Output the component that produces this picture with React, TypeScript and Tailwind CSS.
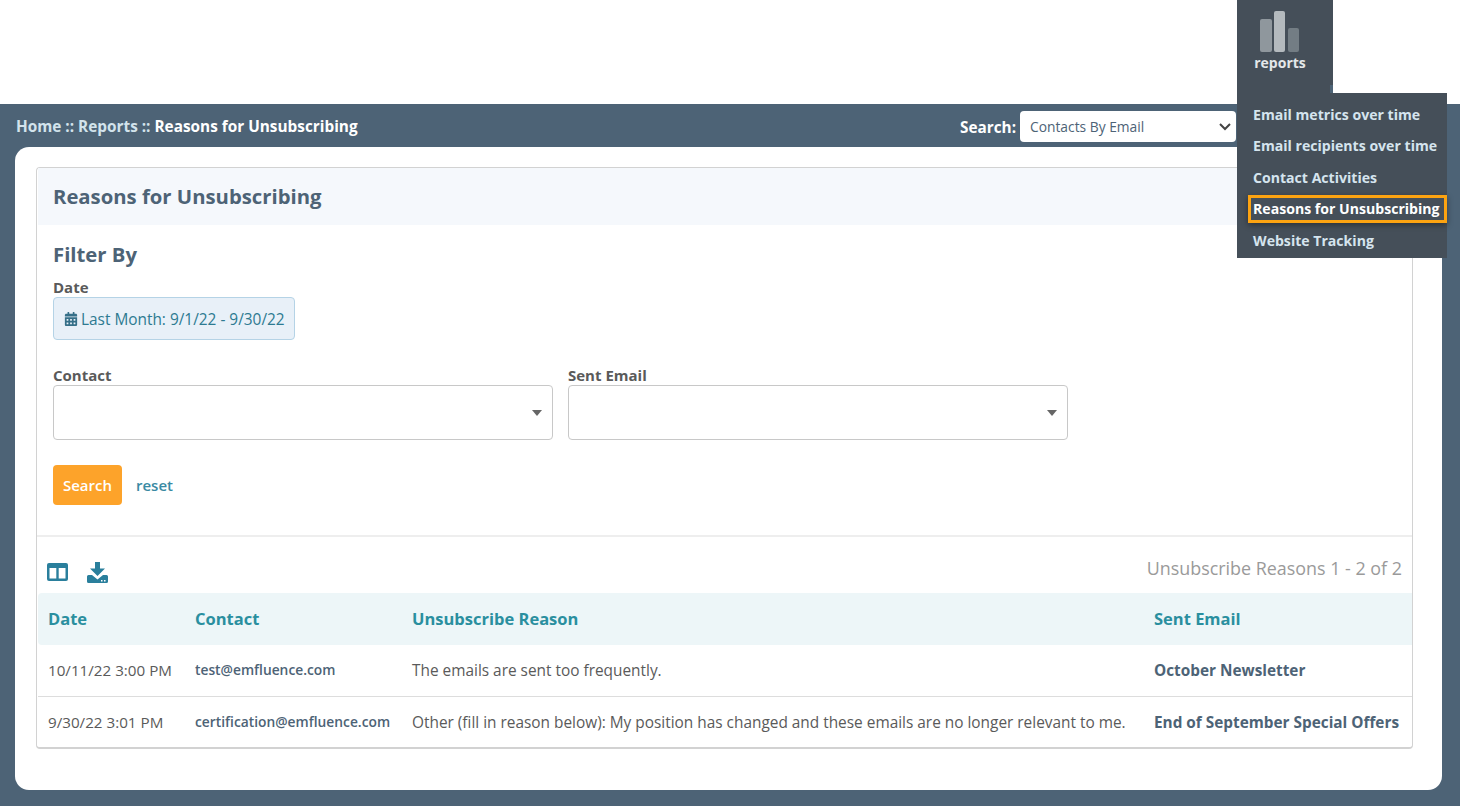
import { FaCalendarAlt } from "react-icons/fa";

const menu = ["Email metrics over time", "Email recipients over time", "Contact Activities", "Reasons for Unsubscribing", "Website Tracking"];

function Select() {
  return (
    <div className="relative h-[55px] w-[500px] rounded-[4px] border border-[#c8c8c8] bg-white">
      <span className="absolute right-[10px] top-[24px] h-0 w-0 border-x-[5px] border-t-[6px] border-x-transparent border-t-[#666]" />
    </div>
  );
}

export default function App() {
  return (
    <div className="relative h-[806px] w-[1460px] overflow-hidden bg-white font-['Open_Sans',sans-serif] text-[#5a5a5a]">
      <header className="flex h-[104px] justify-end bg-white pr-[127px]">
        <div className="flex h-[93px] w-[96px] flex-col items-center bg-[#454f59] pr-[10px] pt-[11px]">
          <svg width="40" height="41" viewBox="0 0 40 41">
            <rect x="0" y="8" width="12" height="33" rx="2" fill="#8f979d" />
            <rect x="14" y="0" width="11" height="41" rx="2" fill="#b4babe" />
            <rect x="28" y="17" width="11" height="24" rx="2" fill="#737d84" />
          </svg>
          <span className="mt-px text-[14px] font-bold leading-[20px] text-[#e4e7e9]">reports</span>
        </div>
      </header>

      <div className="h-[702px] bg-[#4d6376] px-[15px]">
        <div className="-ml-px flex h-[43px] items-center justify-between pl-[2px] pt-[2px]">
          <div className="pt-px text-[15.35px] font-bold text-[#d3e3ec]">
            Home :: Reports :: <span className="text-white">Reasons for Unsubscribing</span>
          </div>
          <div className="mr-[209px] flex items-center gap-[4px]">
            <span className="pt-px text-[15.3px] font-bold text-white">Search:</span>
            <div className="relative flex h-[31px] w-[216px] items-center rounded-[4px] bg-white pl-[10px] pt-px text-[13.8px] text-[#4d6376]">
              Contacts By Email
              <svg width="12" height="8" viewBox="0 0 12 8" className="absolute right-[5px] top-[12px]" fill="none" stroke="#444" strokeWidth="2">
                <path d="M1 1l5 5 5-5" />
              </svg>
            </div>
          </div>
        </div>

        <main className="h-[643px] w-[1427px] rounded-[14px] bg-white px-[21px] pt-[20px]">
          <section className="h-[582px] w-[1377px] rounded-[4px] border border-b-2 border-[#d2d2d2]">
            <div className="mx-px flex h-[57px] items-center bg-[#f5f8fc] px-[15px] text-[20.3px] font-bold text-[#4d6376]">
              Reasons for Unsubscribing
            </div>

            <div className="h-[312px] border-b-2 border-[#eeeeee] px-[16px] pt-[14px]">
              <h2 className="text-[20.3px] font-bold leading-[30px] text-[#4d6376]">Filter By</h2>
              <label className="mt-[9px] block text-[15px] font-bold leading-[19px]">Date</label>
              <div className="flex h-[43px] w-[242px] items-center gap-[3px] rounded-[4px] border border-[#b5d3e6] bg-[#e8f0f8] pl-[10px] text-[15.4px] text-[#2d7a91]">
                <FaCalendarAlt className="text-[14px] text-[#356f88]" />
                <span className="pt-[2px]">Last Month: 9/1/22 - 9/30/22</span>
              </div>

              <div className="mt-[26px] flex gap-[15px]">
                <div>
                  <label className="block text-[15px] font-bold leading-[19px]">Contact</label>
                  <Select />
                </div>
                <div>
                  <label className="block text-[15px] font-bold leading-[19px]">Sent Email</label>
                  <Select />
                </div>
              </div>

              <div className="mt-[25px] flex items-center gap-[14px]">
                <button className="h-[40px] w-[69px] rounded-[4px] bg-[#fda32a] text-[15px] font-semibold text-white">Search</button>
                <a className="text-[15px] font-semibold text-[#3a8aa3]">reset</a>
              </div>
            </div>

            <div className="flex h-[56px] items-center justify-between px-[10px]">
              <div className="flex items-center gap-[19px] pt-[14px]">
                <svg width="21" height="18" viewBox="0 0 21 18">
                  <rect x="0" y="0" width="21" height="18" rx="2" fill="#2a7f9c" />
                  <rect x="2.5" y="5" width="6.8" height="10.5" fill="#fff" />
                  <rect x="11.7" y="5" width="6.8" height="10.5" fill="#fff" />
                </svg>
                <svg width="21" height="21" viewBox="0 0 21 21" fill="#2a7f9c">
                  <path d="M8 0h5v6.500h5l-7.500 7.500L3 6.500h5z" />
                  <path d="M0 14.500a1.500 1.500 0 0 1 1.500-1.500H5l5.500 4.500 5.500-4.500h3.500a1.500 1.500 0 0 1 1.500 1.500V19.500a1.500 1.500 0 0 1-1.500 1.500H1.500A1.500 1.500 0 0 1 0 19.500z" />
                  <rect x="14" y="18" width="1.500" height="1.500" fill="#fff" />
                  <rect x="17" y="18" width="1.500" height="1.500" fill="#fff" />
                </svg>
              </div>
              <span className="pt-[7px] text-[17.9px] text-[#9a9a9a]">Unsubscribe Reasons 1 - 2 of 2</span>
            </div>

            <table className="mx-px w-[1374px] table-fixed border-collapse text-left">
              <colgroup>
                <col className="w-[147px]" />
                <col className="w-[217px]" />
                <col className="w-[742px]" />
                <col />
              </colgroup>
              <thead>
                <tr className="h-[52px] bg-[#edf6f8] text-[16.5px] text-[#2a8f9f]">
                  <th className="rounded-l-[4px] pl-[10px] font-bold">Date</th>
                  <th className="pl-[10px] font-bold">Contact</th>
                  <th className="pl-[10px] font-bold">Unsubscribe Reason</th>
                  <th className="pl-[10px] font-bold">Sent Email</th>
                </tr>
              </thead>
              <tbody>
                <tr className="h-[51px] border-b border-[#dddddd]">
                  <td className="pl-[10px] text-[15.2px]">10/11/22 3:00 PM</td>
                  <td className="pl-[10px] pt-px text-[13.8px] font-semibold text-[#4d6376]">test@emfluence.com</td>
                  <td className="pl-[10px] text-[15.4px]">The emails are sent too frequently.</td>
                  <td className="pl-[10px] text-[15.35px] font-bold text-[#4d6376]">October Newsletter</td>
                </tr>
                <tr className="h-[52px]">
                  <td className="pl-[10px] text-[15.2px]">9/30/22 3:01 PM</td>
                  <td className="pl-[10px] pt-px text-[13.8px] font-semibold text-[#4d6376]">certification@emfluence.com</td>
                  <td className="whitespace-nowrap pl-[10px] text-[15.4px]">Other (fill in reason below): My position has changed and these emails are no longer relevant to me.</td>
                  <td className="whitespace-nowrap pl-[10px] text-[15.35px] font-bold text-[#4d6376]">End of September Special Offers</td>
                </tr>
              </tbody>
            </table>
          </section>
        </main>
      </div>

      <span className="absolute left-[1330px] top-[85px] h-[8px] w-[3px] bg-[#4d6376]" />
      <nav className="absolute left-[1237px] top-[93px] h-[165px] w-[210px] bg-[#454f59] pt-[5.75px]">
        {menu.map((m, i) => (
          <div
            key={m}
            className={
              i === 3
                ? "my-[1.5px] ml-[11px] flex h-[28.5px] items-center border-[3px] border-[#fca311] pl-[2px] text-[14.1px] font-bold whitespace-nowrap text-white shadow-[0_2px_6px_rgba(0,0,0,0.4)]"
                : "ml-[16px] flex h-[31.5px] items-center text-[14.1px] font-bold whitespace-nowrap text-[#d5e4ee]"
            }
          >
            {m}
          </div>
        ))}
      </nav>
    </div>
  );
}
